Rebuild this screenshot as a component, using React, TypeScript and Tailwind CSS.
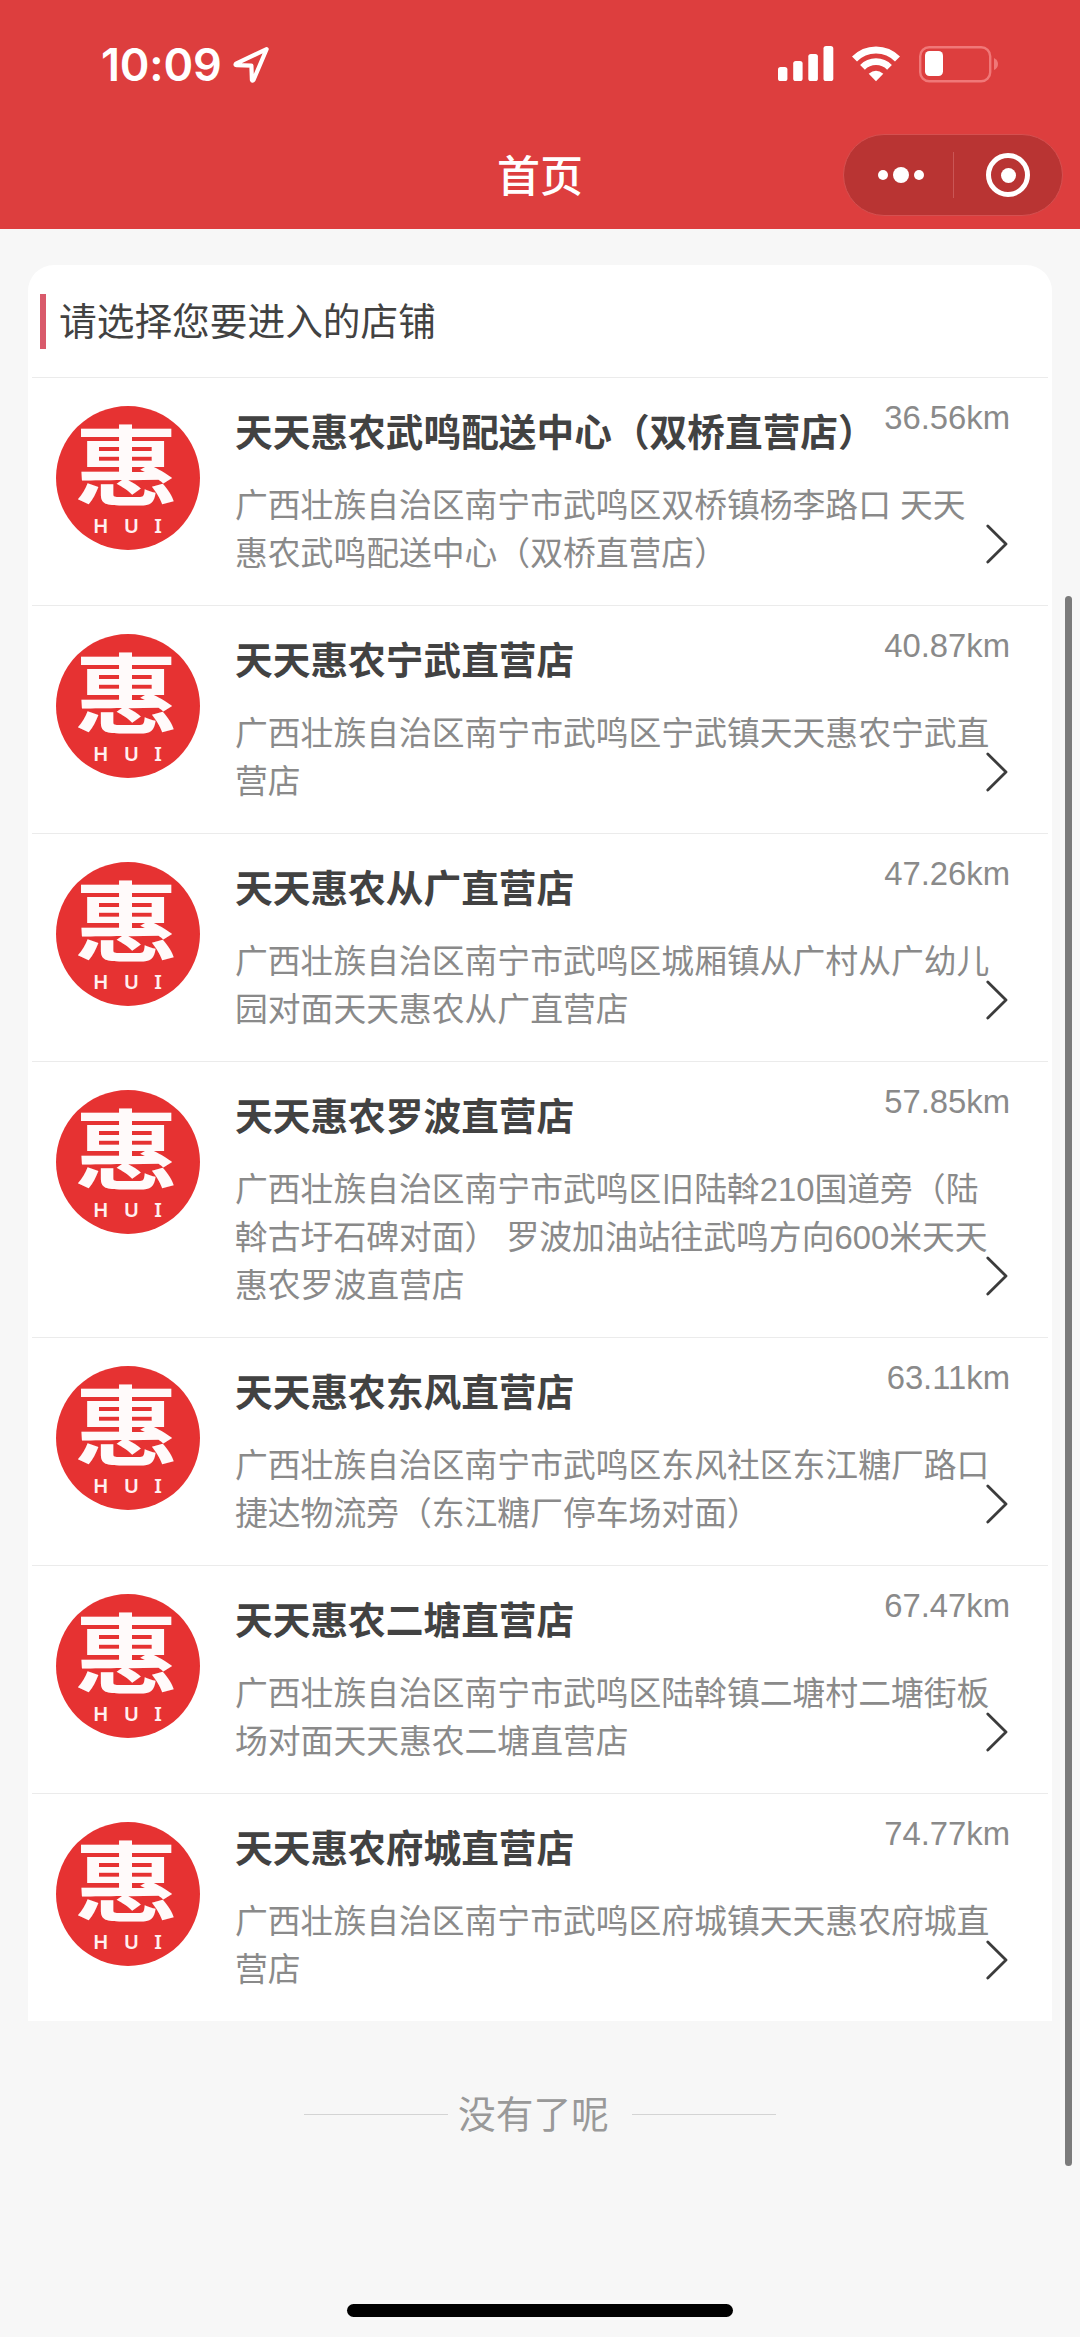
type Store = { name: string; distance: string; address: string[] };

const stores: Store[] = [
  { name: '天天惠农武鸣配送中心（双桥直营店）', distance: '36.56km', address: ['广西壮族自治区南宁市武鸣区双桥镇杨李路口 天天', '惠农武鸣配送中心（双桥直营店）'] },
  { name: '天天惠农宁武直营店', distance: '40.87km', address: ['广西壮族自治区南宁市武鸣区宁武镇天天惠农宁武直', '营店'] },
  { name: '天天惠农从广直营店', distance: '47.26km', address: ['广西壮族自治区南宁市武鸣区城厢镇从广村从广幼儿', '园对面天天惠农从广直营店'] },
  { name: '天天惠农罗波直营店', distance: '57.85km', address: ['广西壮族自治区南宁市武鸣区旧陆斡210国道旁（陆', '斡古圩石碑对面） 罗波加油站往武鸣方向600米天天', '惠农罗波直营店'] },
  { name: '天天惠农东风直营店', distance: '63.11km', address: ['广西壮族自治区南宁市武鸣区东风社区东江糖厂路口', '捷达物流旁（东江糖厂停车场对面）'] },
  { name: '天天惠农二塘直营店', distance: '67.47km', address: ['广西壮族自治区南宁市武鸣区陆斡镇二塘村二塘街板', '场对面天天惠农二塘直营店'] },
  { name: '天天惠农府城直营店', distance: '74.77km', address: ['广西壮族自治区南宁市武鸣区府城镇天天惠农府城直', '营店'] },
];

function StoreLogo() {
  return (
    <svg viewBox="0 0 144 144" className="size-36 shrink-0">
      <circle cx="72" cy="72" r="72" fill="#e63232" />
      <text
        transform="translate(70.5 92.5) scale(1.2 1)"
        textAnchor="middle"
        fontSize="87"
        className="fill-[#fffafa] font-['Noto_Sans_CJK_SC',sans-serif] font-bold"
      >
        惠
      </text>
      <g className="fill-[#fff0f0] font-['Noto_Sans',sans-serif] font-semibold" fontSize="20.5" textAnchor="middle">
        <text x="44.8" y="127">H</text>
        <text x="75.5" y="127">U</text>
        <text x="102" y="127">I</text>
      </g>
    </svg>
  );
}

function StatusBar() {
  return (
    <div className="flex h-[128px] items-start justify-between pl-[101px] pr-[81px] pt-[46px]">
      <div className="flex items-start">
        <span className="w-[131px] font-[Inter,sans-serif] text-[45px] font-semibold leading-[37px] tracking-[-0.2px]">10:09</span>
        <svg width="38" height="38" viewBox="0 0 38 38" className="ml-px" fill="none" stroke="currentColor" strokeWidth="4.2" strokeLinejoin="round">
          <path d="M33.6 3.2 3 17.6q-1.2 1.4.6 1.6l14.8.4.5 14.2q.6 1.8 1.6.2Z" />
        </svg>
      </div>
      <div className="flex items-start">
        <svg width="56" height="36" viewBox="0 0 56 36" fill="currentColor">
          <rect x="0" y="21" width="9.4" height="14" rx="2.6" />
          <rect x="15.2" y="15" width="9.4" height="20" rx="2.6" />
          <rect x="30.3" y="8" width="9.6" height="27" rx="2.6" />
          <rect x="45.5" y="0" width="9.8" height="35" rx="2.6" />
        </svg>
        <svg width="48" height="36" viewBox="0 0 48 36" className="ml-[18px]" fill="none" stroke="currentColor">
          <path d="M2.5 13a30 30 0 0 1 43 0" strokeWidth="7" />
          <path d="M10.5 21.3a19 19 0 0 1 27 0" strokeWidth="6.7" />
          <path d="M24 35.2 16.7 27.8Q24 21.8 31.3 27.8Z" fill="currentColor" stroke="none" />
        </svg>
        <svg width="80" height="37" viewBox="0 0 80 37" className="ml-[19px]">
          <rect x="1.2" y="1.2" width="70" height="34" rx="9" fill="none" stroke="#f07878" strokeWidth="2.4" />
          <rect x="6" y="5" width="18" height="25" rx="4.5" fill="white" />
          <path d="M75 12q4 2 4 6t-4 6Z" fill="#f07878" />
        </svg>
      </div>
    </div>
  );
}

function NavBar() {
  return (
    <div className="grid grid-cols-[1fr_auto_1fr] items-center px-[17px] pt-[6px]">
      <span />
      <h1 className="pb-1 text-[43px] font-medium leading-[78px]">首页</h1>
      <div className="flex h-[82px] w-[220px] items-center justify-self-end rounded-full border border-[#d55050] bg-[#b93433]">
        <div className="flex w-[109px] items-center justify-center gap-[5px] pl-[5px]">
          <i className="size-[10px] rounded-full bg-white" />
          <i className="size-[16px] rounded-full bg-white" />
          <i className="size-[10px] rounded-full bg-white" />
        </div>
        <div className="h-[46px] w-px bg-[#ca5656]" />
        <div className="flex flex-1 items-center justify-center">
          <div className="flex size-[44px] items-center justify-center rounded-full border-[5px] border-white">
            <i className="size-[15px] rounded-full bg-white" />
          </div>
        </div>
      </div>
    </div>
  );
}

function StoreRow({ store }: { store: Store }) {
  return (
    <li className="mx-1 flex border-t border-[#ebebeb] pb-[27px] pl-6 pr-[38px] pt-[28px]">
      <StoreLogo />
      <div className="relative ml-[35px] flex-1">
        <div className="flex h-[53px] items-start justify-between">
          <h2 className="whitespace-nowrap text-[37.7px] font-bold leading-[48px] text-[#424242]">{store.name}</h2>
          <span className="whitespace-nowrap font-['Liberation_Sans',sans-serif] text-[32.8px] leading-[24px] text-[#8a8a8a]">{store.distance}</span>
        </div>
        <p className="mt-[23px] whitespace-nowrap font-['Liberation_Sans','Noto_Sans_CJK_SC',sans-serif] text-[32.8px] leading-[48px] text-[#8a8a8a]">
          {store.address.map((line) => (
            <span key={line} className="block">{line}</span>
          ))}
        </p>
        <svg width="22" height="40" viewBox="0 0 22 40" className="absolute bottom-[14px] right-[2px]" fill="none" stroke="#3c3c3c" strokeWidth="2.8" strokeLinecap="round" strokeLinejoin="round">
          <path d="M1.8 2 20 20 1.8 38" />
        </svg>
      </div>
    </li>
  );
}

export default function App() {
  return (
    <div className="relative flex h-[2337px] w-[1080px] flex-col overflow-hidden bg-[#f7f7f7] font-['Noto_Sans_CJK_SC',sans-serif]">
      <header className="h-[229px] shrink-0 bg-[#dd3e3e] text-white">
        <StatusBar />
        <NavBar />
      </header>

      <main className="mx-7 mt-9 rounded-t-[26px] bg-white">
        <div className="flex h-[112px] items-center pl-3">
          <div className="h-[55px] w-[6px] bg-[#d95a6b]" />
          <p className="pb-1.5 pl-[13px] text-[37.7px] leading-[55px] text-[#424242]">请选择您要进入的店铺</p>
        </div>
        <ul>
          {stores.map((store) => (
            <StoreRow key={store.name} store={store} />
          ))}
        </ul>
      </main>

      <div className="mt-[64px] flex items-center justify-center text-[#999]">
        <div className="h-px w-36 bg-[#d4d4d4]" />
        <p className="ml-[10px] mr-[23px] pb-1 text-[37.7px] leading-[54px]">没有了呢</p>
        <div className="h-px w-36 bg-[#d4d4d4]" />
      </div>

      <div className="absolute left-[1065px] top-[596px] h-[1570px] w-[7px] rounded-full bg-[#7b7b7b]" />
      <div className="mb-5 mt-auto h-[13px] w-[386px] self-center rounded-full bg-black" />
    </div>
  );
}
